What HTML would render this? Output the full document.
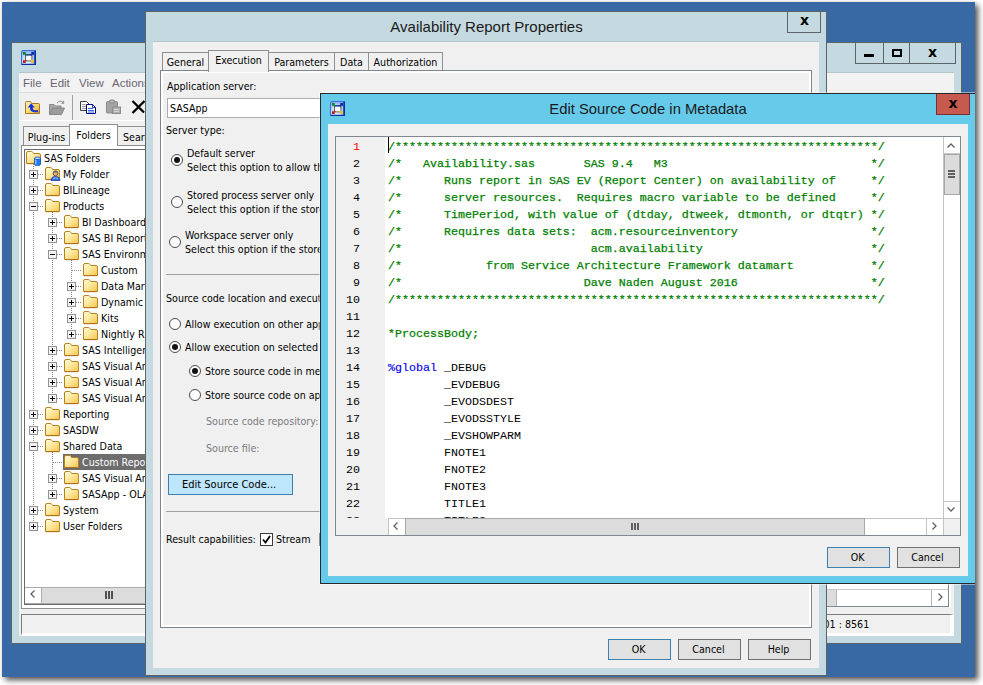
<!DOCTYPE html>
<html><head><meta charset="utf-8"><title>Edit Source Code in Metadata</title>
<style>
*{box-sizing:border-box;margin:0;padding:0}
html,body{width:983px;height:685px;overflow:hidden;background:#fff}
body{font-family:"DejaVu Sans Condensed","DejaVu Sans","Liberation Sans",sans-serif;font-stretch:condensed;font-size:10.6px;color:#000;position:relative}
.lib{font-family:"Liberation Sans",sans-serif;font-stretch:normal}
.abs{position:absolute}
#desk{position:absolute;left:2px;top:2px;width:973px;height:675px;background:#3969a5;box-shadow:3px 3px 6px rgba(0,0,0,.7);overflow:hidden}
#w{position:absolute;left:-2px;top:-2px;width:983px;height:685px}
.win{position:absolute;background:#c5d9e0;border:1px solid #5b6468}
.t{position:absolute;white-space:nowrap;line-height:14px;height:14px;font-size:10.6px}
.btn{position:absolute;background:#e1e1e1;border:1px solid #707070;text-align:center;font-size:10.6px;line-height:19px;height:21px;width:63px;padding-right:2px}
.btn.def{border-color:#3c7fb1}
.radio{position:absolute;width:12px;height:12px;border-radius:50%;background:#fff;border:1px solid #4a4a4a}
.radio.on:after{content:"";position:absolute;left:2px;top:2px;width:6px;height:6px;border-radius:50%;background:#111}
.gray{color:#7a7a80}
.tab{position:absolute;background:#f0f0f0;border:1px solid #8e8f8f;border-bottom:none;font-size:10.6px;white-space:nowrap;text-align:center}
.cap{position:absolute;border:1px solid #5b6468;text-align:center;font-weight:bold;font-size:14px;line-height:18px;color:#000;font-family:"DejaVu Sans","Liberation Sans",sans-serif;font-stretch:normal}
.code{position:absolute;left:388px;font-family:"Liberation Mono",monospace;font-size:11.67px;line-height:17px;height:17px;white-space:pre;color:#008000;-webkit-text-stroke:0.25px currentColor}
.ln{position:absolute;left:336px;width:24px;text-align:right;font-family:"Liberation Mono",monospace;font-size:11.67px;line-height:17px;height:17px;color:#000}
.tr{position:absolute;white-space:nowrap;font-size:10.6px;line-height:16px;height:16px}
.sb{position:absolute;background:#fff;border:1px solid #ababab}
.hline{position:absolute;height:1px;background:#a0a0a0}
svg{position:absolute;overflow:visible}
</style></head><body>
<div id="desk"><div id="w">
<svg width="0" height="0" style="left:0;top:0"><defs><linearGradient id="fg" x1="0" y1="0" x2="1" y2="1"><stop offset="0" stop-color="#fffce0"/><stop offset=".45" stop-color="#fde9a0"/><stop offset="1" stop-color="#f6c24a"/></linearGradient></defs></svg>

<div class="win" style="left:11px;top:42px;width:951px;height:602px"></div>
<div class="abs" style="left:19px;top:72px;width:935px;height:1px;background:#b3c4cc"></div>
<div class="abs" style="left:19px;top:73px;width:935px;height:563px;background:#f0f0f0"></div>
<svg style="left:21px;top:50px" width="16" height="16" viewBox="0 0 16 16">
<defs><radialGradient id="g21_50" cx=".45" cy=".7" r=".75"><stop offset="0" stop-color="#ffffff"/><stop offset=".5" stop-color="#c4dafa"/><stop offset="1" stop-color="#7fa8ee"/></radialGradient></defs>
<path d="M1.500 0 H15 V15 H0 V1.500 Z" fill="#3f6ddb"/>
<path d="M13.200 .8 H15 V15 H.8 V13.800 H13.200 Z" fill="#0b2fa3"/>
<path d="M1.800 1 H13.200 V13.800 H1 V1.800 Z" fill="url(#g21_50)"/>
<rect x="4.600" y="4.600" width="6.300" height="6.300" fill="#fff" stroke="#4c4c4c" stroke-width=".9"/>
<rect x="4.600" y="4.300" width="6.300" height="1.300" fill="#1b3ba3"/>
<path d="M0 0 H3.200 L2.200 1 L3.700 2.500 L2.500 3.700 L1 2.200 L0 3.200 Z" transform="translate(2,2)" fill="#0b8a1b"/>
<path d="M0 0 H3.200 L2.200 1 L3.700 2.500 L2.500 3.700 L1 2.200 L0 3.200 Z" transform="translate(13,2) scale(-1,1)" fill="#0c2a9a"/>
<path d="M0 0 H3.200 L2.200 1 L3.700 2.500 L2.500 3.700 L1 2.200 L0 3.200 Z" transform="translate(2,12.900) scale(1,-1)" fill="#b41c1c"/>
<path d="M0 0 H3.200 L2.200 1 L3.700 2.500 L2.500 3.700 L1 2.200 L0 3.200 Z" transform="translate(13,12.900) scale(-1,-1)" fill="#f4c424"/>
</svg>
<div class="cap" style="left:855px;top:42px;width:29px;height:22px"><div class="abs" style="left:8px;top:11px;width:10px;height:3px;background:#000"></div></div>
<div class="cap" style="left:883px;top:42px;width:27px;height:22px"><div class="abs" style="left:8px;top:6px;width:10px;height:8px;border:2px solid #000"></div></div>
<div class="cap" style="left:909px;top:42px;width:47px;height:22px">x</div>
<div class="abs" style="left:19px;top:73px;width:935px;height:19px;background:#f2f2f2"></div>
<div class="abs" style="left:19px;top:92px;width:935px;height:1px;background:#dcdcdc"></div>
<div class="t gray lib" style="left:23px;top:76px;font-size:11.500px;color:#6b6572">File</div>
<div class="t gray lib" style="left:50px;top:76px;font-size:11.500px;color:#6b6572">Edit</div>
<div class="t gray lib" style="left:79px;top:76px;font-size:11.500px;color:#6b6572">View</div>
<div class="t gray lib" style="left:112px;top:76px;font-size:11.500px;color:#6b6572">Actions</div>
<div class="abs" style="left:72px;top:95px;width:1px;height:25px;background:#a0a0a0"></div>
<div class="abs" style="left:19px;top:120px;width:935px;height:1px;background:#fff"></div>
<svg style="left:25px;top:100px" width="16" height="15" viewBox="0 0 16 15">
<defs><linearGradient id="upf" x1="0" y1="0" x2="1" y2="1"><stop offset="0" stop-color="#fff6cc"/><stop offset=".5" stop-color="#fbd976"/><stop offset="1" stop-color="#f0a92c"/></linearGradient></defs>
<path d="M.5 13.500 V2.500 Q.5 1.500 1.500 1.500 H5.500 L7 3.500 H13.500 Q14.500 3.500 14.500 4.500 V13.500 Z" fill="url(#upf)" stroke="#a87a1c"/>
<path d="M6.200 3.200 L9.900 7.600 H7.700 Q7.700 10.200 10 10.200 H13.200 V12.200 H9.500 Q5 12.200 4.900 7.600 H2.600 Z" fill="#1434dc"/>
</svg>
<svg style="left:48px;top:99px" width="18" height="17" viewBox="0 0 18 17">
<path d="M1.500 15.500 L1.500 5.500 L6 5.500 L7.500 7 L13 7 L13 9" fill="#a8a8a8" stroke="#8a8a8a"/>
<path d="M1.500 15.500 L4.500 9 L16.500 9 L13.500 15.500 Z" fill="#9c9c9c" stroke="#888"/>
<path d="M9 4 Q12 .5 15 3.500" fill="none" stroke="#8a8a8a" stroke-width="1"/><path d="M13.500 4.500 L15.800 4.200 L15.500 1.800" fill="none" stroke="#8a8a8a" stroke-width="1"/>
</svg>
<svg style="left:80px;top:100px" width="17" height="15" viewBox="0 0 17 15">
<path d="M.5 1.500 H6.500 L9.500 4.500 V10.500 H.5 Z" fill="#fff" stroke="#3c3c3c"/>
<path d="M2 4.500H5.500M2 6.500H7.500M2 8.500H7.500" stroke="#a0a0a0" stroke-width="1"/>
<path d="M6.500 4.500 H12.500 L15.500 7.500 V13.500 H6.500 Z" fill="#fff" stroke="#00008c"/>
<path d="M12.500 4.500 V7.500 H15.500" fill="none" stroke="#00008c" stroke-width=".8"/>
<path d="M8 8.500H13M8 10.500H14M8 12H14" stroke="#3a6ae0" stroke-width="1"/>
</svg>
<svg style="left:105px;top:99px" width="17" height="16" viewBox="0 0 17 16">
<rect x="1.500" y="2.500" width="11" height="11.500" rx="1" fill="#a4a4a4" stroke="#8c8c8c"/>
<rect x="4.500" y="1" width="5" height="3" rx="1" fill="#b4b4b4" stroke="#8c8c8c"/>
<rect x="7.500" y="8" width="8" height="6.500" fill="#b0b0b0" stroke="#8c8c8c"/>
<path d="M9 10.500h5M9 12.500h5" stroke="#d4d4d4" stroke-width="1"/>
</svg>
<svg style="left:131px;top:100px" width="16" height="14" viewBox="0 0 16 14"><path d="M1.500 1 L13 12.500 M13.500 1 L1.500 13" stroke="#000" stroke-width="2.300" fill="none"/></svg>
<div class="abs" style="left:21px;top:145px;width:400px;height:464px;border:1px solid #8e8f8f;background:#fff"></div>
<div class="tab" style="left:23px;top:126px;width:47px;height:19px;line-height:20px">Plug-ins</div>
<div class="tab" style="left:117px;top:126px;width:60px;height:19px;line-height:20px;text-align:left;padding-left:5px">Search</div>
<div class="tab" style="left:69px;top:124px;width:49px;height:22px;line-height:20px;background:#fff">Folders</div>
<div class="abs" style="left:24px;top:149px;width:300px;height:456px;border:1px solid #6a6a6a;border-right:none;background:#fff"></div>
<div class="abs" style="left:33px;top:164px;width:1px;height:362px;background:repeating-linear-gradient(180deg,#8a8a8a 0 1px,transparent 1px 2px)"></div>
<div class="abs" style="left:52px;top:212px;width:1px;height:186px;background:repeating-linear-gradient(180deg,#8a8a8a 0 1px,transparent 1px 2px)"></div>
<div class="abs" style="left:71px;top:260px;width:1px;height:74px;background:repeating-linear-gradient(180deg,#8a8a8a 0 1px,transparent 1px 2px)"></div>
<div class="abs" style="left:52px;top:452px;width:1px;height:42px;background:repeating-linear-gradient(180deg,#8a8a8a 0 1px,transparent 1px 2px)"></div>
<svg style="left:26px;top:151px" width="17" height="15" viewBox="0 0 17 15"><path d="M0.500 12.500 V2 Q0.500 .5 2 .5 H5.500 Q6.500 .5 7 1.500 L7.500 2.500 H13 Q14.500 2.500 14.500 4 V12.500 Z" fill="url(#fg)" stroke="#b9801f" stroke-width="1"/><path d="M1 12.700 H14" stroke="#a86c12" stroke-width=".8"/><path d="M8.500 7.300 v6 a3 1.300 0 0 0 6 0 v-6z" fill="#1c7cf4" stroke="#0b48b0" stroke-width=".7"/><path d="M9.800 8.300 v5" stroke="#9fd0ff" stroke-width="1.200"/><ellipse cx="11.500" cy="7.300" rx="3" ry="1.300" fill="#a8d4ff" stroke="#0b48b0" stroke-width=".7"/></svg>
<div class="tr" style="left:44px;top:150.4px">SAS Folders</div>
<div class="abs" style="left:34px;top:174px;width:10px;height:1px;background:repeating-linear-gradient(90deg,#8a8a8a 0 1px,transparent 1px 2px)"></div>
<svg style="left:29px;top:170px" width="9" height="9" viewBox="0 0 9 9"><rect x=".5" y=".5" width="8" height="8" fill="#f4f4f4" stroke="#919191"/><path d="M2 4.5h5" stroke="#000" stroke-width="1"/><path d="M4.5 2v5" stroke="#000" stroke-width="1"/></svg>
<svg style="left:45px;top:167px" width="17" height="15" viewBox="0 0 17 15"><path d="M0.500 12.500 V2 Q0.500 .5 2 .5 H5.500 Q6.500 .5 7 1.500 L7.500 2.500 H13 Q14.500 2.500 14.500 4 V12.500 Z" fill="url(#fg)" stroke="#b9801f" stroke-width="1"/><path d="M1 12.700 H14" stroke="#a86c12" stroke-width=".8"/><circle cx="10.500" cy="6.300" r="2.400" fill="#dcb491" stroke="#4a4038" stroke-width=".8"/><path d="M8.200 5.500 Q10.500 2.500 12.800 5.500" fill="#5a5a5a"/><path d="M6 13.500 q0-4 4.500-4 q4.500 0 4.500 4z" fill="#2f6be0" stroke="#173a9c" stroke-width=".7"/><path d="M8 11.500 q2.500-1.200 5 0" stroke="#9cc4ff" stroke-width="1" fill="none"/></svg>
<div class="tr" style="left:63px;top:166.4px">My Folder</div>
<div class="abs" style="left:34px;top:190px;width:10px;height:1px;background:repeating-linear-gradient(90deg,#8a8a8a 0 1px,transparent 1px 2px)"></div>
<svg style="left:29px;top:186px" width="9" height="9" viewBox="0 0 9 9"><rect x=".5" y=".5" width="8" height="8" fill="#f4f4f4" stroke="#919191"/><path d="M2 4.5h5" stroke="#000" stroke-width="1"/><path d="M4.5 2v5" stroke="#000" stroke-width="1"/></svg>
<svg style="left:45px;top:183px" width="17" height="15" viewBox="0 0 17 15"><path d="M0.500 12.500 V2 Q0.500 .5 2 .5 H5.500 Q6.500 .5 7 1.500 L7.500 2.500 H13 Q14.500 2.500 14.500 4 V12.500 Z" fill="url(#fg)" stroke="#b9801f" stroke-width="1"/><path d="M1 12.700 H14" stroke="#a86c12" stroke-width=".8"/></svg>
<div class="tr" style="left:63px;top:182.4px">BILineage</div>
<div class="abs" style="left:34px;top:206px;width:10px;height:1px;background:repeating-linear-gradient(90deg,#8a8a8a 0 1px,transparent 1px 2px)"></div>
<svg style="left:29px;top:202px" width="9" height="9" viewBox="0 0 9 9"><rect x=".5" y=".5" width="8" height="8" fill="#f4f4f4" stroke="#919191"/><path d="M2 4.5h5" stroke="#000" stroke-width="1"/></svg>
<svg style="left:45px;top:199px" width="17" height="15" viewBox="0 0 17 15"><path d="M0.500 12.500 V2 Q0.500 .5 2 .5 H5.500 Q6.500 .5 7 1.500 L7.500 2.500 H13 Q14.500 2.500 14.500 4 V12.500 Z" fill="url(#fg)" stroke="#b9801f" stroke-width="1"/><path d="M1 12.700 H14" stroke="#a86c12" stroke-width=".8"/></svg>
<div class="tr" style="left:63px;top:198.4px">Products</div>
<div class="abs" style="left:53px;top:222px;width:10px;height:1px;background:repeating-linear-gradient(90deg,#8a8a8a 0 1px,transparent 1px 2px)"></div>
<svg style="left:48px;top:218px" width="9" height="9" viewBox="0 0 9 9"><rect x=".5" y=".5" width="8" height="8" fill="#f4f4f4" stroke="#919191"/><path d="M2 4.5h5" stroke="#000" stroke-width="1"/><path d="M4.5 2v5" stroke="#000" stroke-width="1"/></svg>
<svg style="left:64px;top:215px" width="17" height="15" viewBox="0 0 17 15"><path d="M0.500 12.500 V2 Q0.500 .5 2 .5 H5.500 Q6.500 .5 7 1.500 L7.500 2.500 H13 Q14.500 2.500 14.500 4 V12.500 Z" fill="url(#fg)" stroke="#b9801f" stroke-width="1"/><path d="M1 12.700 H14" stroke="#a86c12" stroke-width=".8"/></svg>
<div class="tr" style="left:82px;top:214.4px">BI Dashboard</div>
<div class="abs" style="left:53px;top:238px;width:10px;height:1px;background:repeating-linear-gradient(90deg,#8a8a8a 0 1px,transparent 1px 2px)"></div>
<svg style="left:48px;top:234px" width="9" height="9" viewBox="0 0 9 9"><rect x=".5" y=".5" width="8" height="8" fill="#f4f4f4" stroke="#919191"/><path d="M2 4.5h5" stroke="#000" stroke-width="1"/><path d="M4.5 2v5" stroke="#000" stroke-width="1"/></svg>
<svg style="left:64px;top:231px" width="17" height="15" viewBox="0 0 17 15"><path d="M0.500 12.500 V2 Q0.500 .5 2 .5 H5.500 Q6.500 .5 7 1.500 L7.500 2.500 H13 Q14.500 2.500 14.500 4 V12.500 Z" fill="url(#fg)" stroke="#b9801f" stroke-width="1"/><path d="M1 12.700 H14" stroke="#a86c12" stroke-width=".8"/></svg>
<div class="tr" style="left:82px;top:230.4px">SAS BI Report</div>
<div class="abs" style="left:53px;top:254px;width:10px;height:1px;background:repeating-linear-gradient(90deg,#8a8a8a 0 1px,transparent 1px 2px)"></div>
<svg style="left:48px;top:250px" width="9" height="9" viewBox="0 0 9 9"><rect x=".5" y=".5" width="8" height="8" fill="#f4f4f4" stroke="#919191"/><path d="M2 4.5h5" stroke="#000" stroke-width="1"/></svg>
<svg style="left:64px;top:247px" width="17" height="15" viewBox="0 0 17 15"><path d="M0.500 12.500 V2 Q0.500 .5 2 .5 H5.500 Q6.500 .5 7 1.500 L7.500 2.500 H13 Q14.500 2.500 14.500 4 V12.500 Z" fill="url(#fg)" stroke="#b9801f" stroke-width="1"/><path d="M1 12.700 H14" stroke="#a86c12" stroke-width=".8"/></svg>
<div class="tr" style="left:82px;top:246.4px">SAS Environme</div>
<div class="abs" style="left:72px;top:270px;width:10px;height:1px;background:repeating-linear-gradient(90deg,#8a8a8a 0 1px,transparent 1px 2px)"></div>
<svg style="left:83px;top:263px" width="17" height="15" viewBox="0 0 17 15"><path d="M0.500 12.500 V2 Q0.500 .5 2 .5 H5.500 Q6.500 .5 7 1.500 L7.500 2.500 H13 Q14.500 2.500 14.500 4 V12.500 Z" fill="url(#fg)" stroke="#b9801f" stroke-width="1"/><path d="M1 12.700 H14" stroke="#a86c12" stroke-width=".8"/></svg>
<div class="tr" style="left:101px;top:262.4px">Custom</div>
<div class="abs" style="left:72px;top:286px;width:10px;height:1px;background:repeating-linear-gradient(90deg,#8a8a8a 0 1px,transparent 1px 2px)"></div>
<svg style="left:67px;top:282px" width="9" height="9" viewBox="0 0 9 9"><rect x=".5" y=".5" width="8" height="8" fill="#f4f4f4" stroke="#919191"/><path d="M2 4.5h5" stroke="#000" stroke-width="1"/><path d="M4.5 2v5" stroke="#000" stroke-width="1"/></svg>
<svg style="left:83px;top:279px" width="17" height="15" viewBox="0 0 17 15"><path d="M0.500 12.500 V2 Q0.500 .5 2 .5 H5.500 Q6.500 .5 7 1.500 L7.500 2.500 H13 Q14.500 2.500 14.500 4 V12.500 Z" fill="url(#fg)" stroke="#b9801f" stroke-width="1"/><path d="M1 12.700 H14" stroke="#a86c12" stroke-width=".8"/></svg>
<div class="tr" style="left:101px;top:278.4px">Data Mar</div>
<div class="abs" style="left:72px;top:302px;width:10px;height:1px;background:repeating-linear-gradient(90deg,#8a8a8a 0 1px,transparent 1px 2px)"></div>
<svg style="left:67px;top:298px" width="9" height="9" viewBox="0 0 9 9"><rect x=".5" y=".5" width="8" height="8" fill="#f4f4f4" stroke="#919191"/><path d="M2 4.5h5" stroke="#000" stroke-width="1"/><path d="M4.5 2v5" stroke="#000" stroke-width="1"/></svg>
<svg style="left:83px;top:295px" width="17" height="15" viewBox="0 0 17 15"><path d="M0.500 12.500 V2 Q0.500 .5 2 .5 H5.500 Q6.500 .5 7 1.500 L7.500 2.500 H13 Q14.500 2.500 14.500 4 V12.500 Z" fill="url(#fg)" stroke="#b9801f" stroke-width="1"/><path d="M1 12.700 H14" stroke="#a86c12" stroke-width=".8"/></svg>
<div class="tr" style="left:101px;top:294.4px">Dynamic</div>
<div class="abs" style="left:72px;top:318px;width:10px;height:1px;background:repeating-linear-gradient(90deg,#8a8a8a 0 1px,transparent 1px 2px)"></div>
<svg style="left:67px;top:314px" width="9" height="9" viewBox="0 0 9 9"><rect x=".5" y=".5" width="8" height="8" fill="#f4f4f4" stroke="#919191"/><path d="M2 4.5h5" stroke="#000" stroke-width="1"/><path d="M4.5 2v5" stroke="#000" stroke-width="1"/></svg>
<svg style="left:83px;top:311px" width="17" height="15" viewBox="0 0 17 15"><path d="M0.500 12.500 V2 Q0.500 .5 2 .5 H5.500 Q6.500 .5 7 1.500 L7.500 2.500 H13 Q14.500 2.500 14.500 4 V12.500 Z" fill="url(#fg)" stroke="#b9801f" stroke-width="1"/><path d="M1 12.700 H14" stroke="#a86c12" stroke-width=".8"/></svg>
<div class="tr" style="left:101px;top:310.4px">Kits</div>
<div class="abs" style="left:72px;top:334px;width:10px;height:1px;background:repeating-linear-gradient(90deg,#8a8a8a 0 1px,transparent 1px 2px)"></div>
<svg style="left:67px;top:330px" width="9" height="9" viewBox="0 0 9 9"><rect x=".5" y=".5" width="8" height="8" fill="#f4f4f4" stroke="#919191"/><path d="M2 4.5h5" stroke="#000" stroke-width="1"/><path d="M4.5 2v5" stroke="#000" stroke-width="1"/></svg>
<svg style="left:83px;top:327px" width="17" height="15" viewBox="0 0 17 15"><path d="M0.500 12.500 V2 Q0.500 .5 2 .5 H5.500 Q6.500 .5 7 1.500 L7.500 2.500 H13 Q14.500 2.500 14.500 4 V12.500 Z" fill="url(#fg)" stroke="#b9801f" stroke-width="1"/><path d="M1 12.700 H14" stroke="#a86c12" stroke-width=".8"/></svg>
<div class="tr" style="left:101px;top:326.4px">Nightly R</div>
<div class="abs" style="left:53px;top:350px;width:10px;height:1px;background:repeating-linear-gradient(90deg,#8a8a8a 0 1px,transparent 1px 2px)"></div>
<svg style="left:48px;top:346px" width="9" height="9" viewBox="0 0 9 9"><rect x=".5" y=".5" width="8" height="8" fill="#f4f4f4" stroke="#919191"/><path d="M2 4.5h5" stroke="#000" stroke-width="1"/><path d="M4.5 2v5" stroke="#000" stroke-width="1"/></svg>
<svg style="left:64px;top:343px" width="17" height="15" viewBox="0 0 17 15"><path d="M0.500 12.500 V2 Q0.500 .5 2 .5 H5.500 Q6.500 .5 7 1.500 L7.500 2.500 H13 Q14.500 2.500 14.500 4 V12.500 Z" fill="url(#fg)" stroke="#b9801f" stroke-width="1"/><path d="M1 12.700 H14" stroke="#a86c12" stroke-width=".8"/></svg>
<div class="tr" style="left:82px;top:342.4px">SAS Intelligen</div>
<div class="abs" style="left:53px;top:366px;width:10px;height:1px;background:repeating-linear-gradient(90deg,#8a8a8a 0 1px,transparent 1px 2px)"></div>
<svg style="left:48px;top:362px" width="9" height="9" viewBox="0 0 9 9"><rect x=".5" y=".5" width="8" height="8" fill="#f4f4f4" stroke="#919191"/><path d="M2 4.5h5" stroke="#000" stroke-width="1"/><path d="M4.5 2v5" stroke="#000" stroke-width="1"/></svg>
<svg style="left:64px;top:359px" width="17" height="15" viewBox="0 0 17 15"><path d="M0.500 12.500 V2 Q0.500 .5 2 .5 H5.500 Q6.500 .5 7 1.500 L7.500 2.500 H13 Q14.500 2.500 14.500 4 V12.500 Z" fill="url(#fg)" stroke="#b9801f" stroke-width="1"/><path d="M1 12.700 H14" stroke="#a86c12" stroke-width=".8"/></svg>
<div class="tr" style="left:82px;top:358.4px">SAS Visual An</div>
<div class="abs" style="left:53px;top:382px;width:10px;height:1px;background:repeating-linear-gradient(90deg,#8a8a8a 0 1px,transparent 1px 2px)"></div>
<svg style="left:48px;top:378px" width="9" height="9" viewBox="0 0 9 9"><rect x=".5" y=".5" width="8" height="8" fill="#f4f4f4" stroke="#919191"/><path d="M2 4.5h5" stroke="#000" stroke-width="1"/><path d="M4.5 2v5" stroke="#000" stroke-width="1"/></svg>
<svg style="left:64px;top:375px" width="17" height="15" viewBox="0 0 17 15"><path d="M0.500 12.500 V2 Q0.500 .5 2 .5 H5.500 Q6.500 .5 7 1.500 L7.500 2.500 H13 Q14.500 2.500 14.500 4 V12.500 Z" fill="url(#fg)" stroke="#b9801f" stroke-width="1"/><path d="M1 12.700 H14" stroke="#a86c12" stroke-width=".8"/></svg>
<div class="tr" style="left:82px;top:374.4px">SAS Visual An</div>
<div class="abs" style="left:53px;top:398px;width:10px;height:1px;background:repeating-linear-gradient(90deg,#8a8a8a 0 1px,transparent 1px 2px)"></div>
<svg style="left:48px;top:394px" width="9" height="9" viewBox="0 0 9 9"><rect x=".5" y=".5" width="8" height="8" fill="#f4f4f4" stroke="#919191"/><path d="M2 4.5h5" stroke="#000" stroke-width="1"/><path d="M4.5 2v5" stroke="#000" stroke-width="1"/></svg>
<svg style="left:64px;top:391px" width="17" height="15" viewBox="0 0 17 15"><path d="M0.500 12.500 V2 Q0.500 .5 2 .5 H5.500 Q6.500 .5 7 1.500 L7.500 2.500 H13 Q14.500 2.500 14.500 4 V12.500 Z" fill="url(#fg)" stroke="#b9801f" stroke-width="1"/><path d="M1 12.700 H14" stroke="#a86c12" stroke-width=".8"/></svg>
<div class="tr" style="left:82px;top:390.4px">SAS Visual An</div>
<div class="abs" style="left:34px;top:414px;width:10px;height:1px;background:repeating-linear-gradient(90deg,#8a8a8a 0 1px,transparent 1px 2px)"></div>
<svg style="left:29px;top:410px" width="9" height="9" viewBox="0 0 9 9"><rect x=".5" y=".5" width="8" height="8" fill="#f4f4f4" stroke="#919191"/><path d="M2 4.5h5" stroke="#000" stroke-width="1"/><path d="M4.5 2v5" stroke="#000" stroke-width="1"/></svg>
<svg style="left:45px;top:407px" width="17" height="15" viewBox="0 0 17 15"><path d="M0.500 12.500 V2 Q0.500 .5 2 .5 H5.500 Q6.500 .5 7 1.500 L7.500 2.500 H13 Q14.500 2.500 14.500 4 V12.500 Z" fill="url(#fg)" stroke="#b9801f" stroke-width="1"/><path d="M1 12.700 H14" stroke="#a86c12" stroke-width=".8"/></svg>
<div class="tr" style="left:63px;top:406.4px">Reporting</div>
<div class="abs" style="left:34px;top:430px;width:10px;height:1px;background:repeating-linear-gradient(90deg,#8a8a8a 0 1px,transparent 1px 2px)"></div>
<svg style="left:29px;top:426px" width="9" height="9" viewBox="0 0 9 9"><rect x=".5" y=".5" width="8" height="8" fill="#f4f4f4" stroke="#919191"/><path d="M2 4.5h5" stroke="#000" stroke-width="1"/><path d="M4.5 2v5" stroke="#000" stroke-width="1"/></svg>
<svg style="left:45px;top:423px" width="17" height="15" viewBox="0 0 17 15"><path d="M0.500 12.500 V2 Q0.500 .5 2 .5 H5.500 Q6.500 .5 7 1.500 L7.500 2.500 H13 Q14.500 2.500 14.500 4 V12.500 Z" fill="url(#fg)" stroke="#b9801f" stroke-width="1"/><path d="M1 12.700 H14" stroke="#a86c12" stroke-width=".8"/></svg>
<div class="tr" style="left:63px;top:422.4px">SASDW</div>
<div class="abs" style="left:34px;top:446px;width:10px;height:1px;background:repeating-linear-gradient(90deg,#8a8a8a 0 1px,transparent 1px 2px)"></div>
<svg style="left:29px;top:442px" width="9" height="9" viewBox="0 0 9 9"><rect x=".5" y=".5" width="8" height="8" fill="#f4f4f4" stroke="#919191"/><path d="M2 4.5h5" stroke="#000" stroke-width="1"/></svg>
<svg style="left:45px;top:439px" width="17" height="15" viewBox="0 0 17 15"><path d="M0.500 12.500 V2 Q0.500 .5 2 .5 H5.500 Q6.500 .5 7 1.500 L7.500 2.500 H13 Q14.500 2.500 14.500 4 V12.500 Z" fill="url(#fg)" stroke="#b9801f" stroke-width="1"/><path d="M1 12.700 H14" stroke="#a86c12" stroke-width=".8"/></svg>
<div class="tr" style="left:63px;top:438.4px">Shared Data</div>
<div class="abs" style="left:53px;top:462px;width:10px;height:1px;background:repeating-linear-gradient(90deg,#8a8a8a 0 1px,transparent 1px 2px)"></div>
<div class="abs" style="left:63px;top:454px;width:100px;height:16px;background:#6d6d6d"></div>
<svg style="left:64px;top:455px" width="17" height="15" viewBox="0 0 17 15"><path d="M0.500 12.500 V2 Q0.500 .5 2 .5 H5.500 Q6.500 .5 7 1.500 L7.500 2.500 H13 Q14.500 2.500 14.500 4 V12.500 Z" fill="url(#fg)" stroke="#b9801f" stroke-width="1"/><path d="M1 12.700 H14" stroke="#a86c12" stroke-width=".8"/></svg>
<div class="tr" style="left:82px;top:454.4px;color:#fff">Custom Repo</div>
<div class="abs" style="left:53px;top:478px;width:10px;height:1px;background:repeating-linear-gradient(90deg,#8a8a8a 0 1px,transparent 1px 2px)"></div>
<svg style="left:48px;top:474px" width="9" height="9" viewBox="0 0 9 9"><rect x=".5" y=".5" width="8" height="8" fill="#f4f4f4" stroke="#919191"/><path d="M2 4.5h5" stroke="#000" stroke-width="1"/><path d="M4.5 2v5" stroke="#000" stroke-width="1"/></svg>
<svg style="left:64px;top:471px" width="17" height="15" viewBox="0 0 17 15"><path d="M0.500 12.500 V2 Q0.500 .5 2 .5 H5.500 Q6.500 .5 7 1.500 L7.500 2.500 H13 Q14.500 2.500 14.500 4 V12.500 Z" fill="url(#fg)" stroke="#b9801f" stroke-width="1"/><path d="M1 12.700 H14" stroke="#a86c12" stroke-width=".8"/></svg>
<div class="tr" style="left:82px;top:470.4px">SAS Visual An</div>
<div class="abs" style="left:53px;top:494px;width:10px;height:1px;background:repeating-linear-gradient(90deg,#8a8a8a 0 1px,transparent 1px 2px)"></div>
<svg style="left:48px;top:490px" width="9" height="9" viewBox="0 0 9 9"><rect x=".5" y=".5" width="8" height="8" fill="#f4f4f4" stroke="#919191"/><path d="M2 4.5h5" stroke="#000" stroke-width="1"/><path d="M4.5 2v5" stroke="#000" stroke-width="1"/></svg>
<svg style="left:64px;top:487px" width="17" height="15" viewBox="0 0 17 15"><path d="M0.500 12.500 V2 Q0.500 .5 2 .5 H5.500 Q6.500 .5 7 1.500 L7.500 2.500 H13 Q14.500 2.500 14.500 4 V12.500 Z" fill="url(#fg)" stroke="#b9801f" stroke-width="1"/><path d="M1 12.700 H14" stroke="#a86c12" stroke-width=".8"/></svg>
<div class="tr" style="left:82px;top:486.4px">SASApp - OLA</div>
<div class="abs" style="left:34px;top:510px;width:10px;height:1px;background:repeating-linear-gradient(90deg,#8a8a8a 0 1px,transparent 1px 2px)"></div>
<svg style="left:29px;top:506px" width="9" height="9" viewBox="0 0 9 9"><rect x=".5" y=".5" width="8" height="8" fill="#f4f4f4" stroke="#919191"/><path d="M2 4.5h5" stroke="#000" stroke-width="1"/><path d="M4.5 2v5" stroke="#000" stroke-width="1"/></svg>
<svg style="left:45px;top:503px" width="17" height="15" viewBox="0 0 17 15"><path d="M0.500 12.500 V2 Q0.500 .5 2 .5 H5.500 Q6.500 .5 7 1.500 L7.500 2.500 H13 Q14.500 2.500 14.500 4 V12.500 Z" fill="url(#fg)" stroke="#b9801f" stroke-width="1"/><path d="M1 12.700 H14" stroke="#a86c12" stroke-width=".8"/></svg>
<div class="tr" style="left:63px;top:502.4px">System</div>
<div class="abs" style="left:34px;top:526px;width:10px;height:1px;background:repeating-linear-gradient(90deg,#8a8a8a 0 1px,transparent 1px 2px)"></div>
<svg style="left:29px;top:522px" width="9" height="9" viewBox="0 0 9 9"><rect x=".5" y=".5" width="8" height="8" fill="#f4f4f4" stroke="#919191"/><path d="M2 4.5h5" stroke="#000" stroke-width="1"/><path d="M4.5 2v5" stroke="#000" stroke-width="1"/></svg>
<svg style="left:45px;top:519px" width="17" height="15" viewBox="0 0 17 15"><path d="M0.500 12.500 V2 Q0.500 .5 2 .5 H5.500 Q6.500 .5 7 1.500 L7.500 2.500 H13 Q14.500 2.500 14.500 4 V12.500 Z" fill="url(#fg)" stroke="#b9801f" stroke-width="1"/><path d="M1 12.700 H14" stroke="#a86c12" stroke-width=".8"/></svg>
<div class="tr" style="left:63px;top:518.4px">User Folders</div>
<div class="abs" style="left:25px;top:587px;width:300px;height:17px;background:#dcdcdc;border-top:1px solid #ababab;border-bottom:1px solid #ababab"></div>
<div class="abs" style="left:25px;top:588px;width:17px;height:15px;background:#fff;border-right:1px solid #ababab"></div>
<svg style="left:32.5px;top:594.2px" width="1" height="1"><path d="M1.500 -3.500 L-2 0 L1.500 3.500" fill="none" stroke="#606060" stroke-width="1.300"/></svg>
<div class="abs" style="left:105px;top:591px;width:8px;height:8px;background:repeating-linear-gradient(90deg,#505050 0 2px,transparent 2px 3px)"></div>
<div class="abs" style="left:21px;top:614px;width:933px;height:22px;border:1px solid #7c7c7c;border-right:4px solid #fff;border-bottom:3px solid #fff;background:#f0f0f0"></div>
<div class="t " style="left:817.5px;top:617px;">001 : 8561</div>
<div class="abs" style="left:500px;top:584px;width:449px;height:23px;background:#fff;border-right:1px solid #828790;border-bottom:1px solid #828790"></div>
<div class="abs" style="left:949px;top:584px;width:2px;height:24px;background:#fff"></div>
<div class="abs" style="left:500px;top:589px;width:448px;height:1px;background:#c8c8c8"></div>
<div class="abs" style="left:500px;top:590px;width:337px;height:16px;background:#dcdcdc;border-right:1px solid #b4b4b4"></div>
<div class="abs" style="left:931px;top:590px;width:1px;height:16px;background:#b4b4b4"></div>
<svg style="left:939.5px;top:597.2px" width="1" height="1"><path d="M-1.500 -3.500 L2 0 L-1.500 3.500" fill="none" stroke="#606060" stroke-width="1.300"/></svg>
<div class="win" style="left:145px;top:11px;width:682px;height:665px"></div>
<div class="abs" style="left:153px;top:41px;width:666px;height:1px;background:#b3c4cc"></div>
<div class="abs" style="left:153px;top:42px;width:666px;height:626px;background:#f0f0f0"></div>
<div class="t" style="left:146px;top:17px;width:681px;text-align:center;font-size:15px;line-height:20px;height:20px;color:#1a1a1a;font-family:'Liberation Sans',sans-serif">Availability Report Properties</div>
<div class="cap" style="left:787px;top:11px;width:34px;height:22px;line-height:17px;padding-left:1px">x</div>
<div class="abs" style="left:160px;top:70px;width:652px;height:558px;border:1px solid #7f858e;background:#f0f0f0;box-shadow:inset 0 0 0 2px #fff"></div>
<div class="tab" style="left:162px;top:52px;width:47px;height:18px;line-height:18px">General</div>
<div class="tab" style="left:268px;top:52px;width:67px;height:18px;line-height:18px">Parameters</div>
<div class="tab" style="left:334px;top:52px;width:35px;height:18px;line-height:18px">Data</div>
<div class="tab" style="left:368px;top:52px;width:75px;height:18px;line-height:18px">Authorization</div>
<div class="tab" style="left:208px;top:50px;width:61px;height:22px;line-height:19px">Execution</div>
<div class="t " style="left:167px;top:79px;">Application server:</div>
<div class="abs" style="left:167px;top:98px;width:644px;height:20px;background:#fff;border:1px solid #abadb3"></div>
<div class="t " style="left:170px;top:101px;">SASApp</div>
<div class="t " style="left:166px;top:123px;">Server type:</div>
<div class="radio on" style="left:171px;top:154px"></div>
<div class="t " style="left:187px;top:146px;">Default server</div>
<div class="t " style="left:187px;top:160px;">Select this option to allow the</div>
<div class="radio" style="left:171px;top:196px"></div>
<div class="t " style="left:187px;top:188px;">Stored process server only</div>
<div class="t " style="left:187px;top:202px;">Select this option if the stored</div>
<div class="radio" style="left:169px;top:236px"></div>
<div class="t " style="left:185px;top:228px;">Workspace server only</div>
<div class="t " style="left:185px;top:242px;">Select this option if the stored</div>
<div class="hline" style="left:166px;top:274px;width:640px"></div>
<div class="t " style="left:166px;top:291px;">Source code location and execution</div>
<div class="radio" style="left:169px;top:318px"></div>
<div class="t " style="left:185px;top:317px;">Allow execution on other app</div>
<div class="radio on" style="left:169px;top:341px"></div>
<div class="t " style="left:185px;top:340px;">Allow execution on selected a</div>
<div class="radio on" style="left:189px;top:365px"></div>
<div class="t " style="left:205px;top:364px;">Store source code in metadata</div>
<div class="radio" style="left:189px;top:389px"></div>
<div class="t " style="left:205px;top:388px;">Store source code on app</div>
<div class="t gray" style="left:206px;top:414px;">Source code repository:</div>
<div class="t gray" style="left:206px;top:441px;">Source file:</div>
<div class="btn" style="left:168px;top:474px;width:125px;height:21px;background:#bee6fd;border-color:#3c7fb1;text-align:left;padding-left:13px;font-size:11px">Edit Source Code...</div>
<div class="hline" style="left:166px;top:511px;width:640px"></div>
<div class="t " style="left:166px;top:532px;">Result capabilities:</div>
<div class="abs" style="left:260px;top:533px;width:13px;height:13px;background:#fff;border:1px solid #3a3a3a"></div>
<svg style="left:262px;top:535px" width="9" height="9" viewBox="0 0 9 9"><path d="M1 4.500 L3.500 7.500 L8 1" fill="none" stroke="#000" stroke-width="1.800"/></svg>
<div class="t " style="left:276px;top:532px;">Stream</div>
<div class="abs" style="left:319px;top:533px;width:13px;height:13px;background:#fff;border:1px solid #3a3a3a"></div>
<div class="btn def" style="left:608px;top:639px">OK</div>
<div class="btn" style="left:678px;top:639px">Cancel</div>
<div class="btn" style="left:748px;top:639px">Help</div>
<div class="win" style="left:320px;top:93px;width:656px;height:491px;background:#66cbea;border-color:#26282c;box-shadow:0 0 0 1px rgba(255,255,255,.45)"></div>
<div class="abs" style="left:328px;top:124px;width:640px;height:452px;background:#f0f0f0"></div>
<svg style="left:330px;top:101px" width="16" height="16" viewBox="0 0 16 16">
<defs><radialGradient id="g330_101" cx=".45" cy=".7" r=".75"><stop offset="0" stop-color="#ffffff"/><stop offset=".5" stop-color="#c4dafa"/><stop offset="1" stop-color="#7fa8ee"/></radialGradient></defs>
<path d="M1.500 0 H15 V15 H0 V1.500 Z" fill="#3f6ddb"/>
<path d="M13.200 .8 H15 V15 H.8 V13.800 H13.200 Z" fill="#0b2fa3"/>
<path d="M1.800 1 H13.200 V13.800 H1 V1.800 Z" fill="url(#g330_101)"/>
<rect x="4.600" y="4.600" width="6.300" height="6.300" fill="#fff" stroke="#4c4c4c" stroke-width=".9"/>
<rect x="4.600" y="4.300" width="6.300" height="1.300" fill="#1b3ba3"/>
<path d="M0 0 H3.200 L2.200 1 L3.700 2.500 L2.500 3.700 L1 2.200 L0 3.200 Z" transform="translate(2,2)" fill="#0b8a1b"/>
<path d="M0 0 H3.200 L2.200 1 L3.700 2.500 L2.500 3.700 L1 2.200 L0 3.200 Z" transform="translate(13,2) scale(-1,1)" fill="#0c2a9a"/>
<path d="M0 0 H3.200 L2.200 1 L3.700 2.500 L2.500 3.700 L1 2.200 L0 3.200 Z" transform="translate(2,12.900) scale(1,-1)" fill="#b41c1c"/>
<path d="M0 0 H3.200 L2.200 1 L3.700 2.500 L2.500 3.700 L1 2.200 L0 3.200 Z" transform="translate(13,12.900) scale(-1,-1)" fill="#f4c424"/>
</svg>
<div class="t" style="left:320px;top:99px;width:656px;text-align:center;font-size:14.800px;line-height:20px;height:20px;color:#1a1a1a;font-family:'Liberation Sans',sans-serif">Edit Source Code in Metadata</div>
<div class="cap" style="left:936px;top:94px;width:34px;height:21px;background:#c65a4e;border:1px solid #7a3030;border-top:none">x</div>
<div class="abs" style="left:335px;top:136px;width:626px;height:400px;border:1px solid #828790;background:#fff"></div>
<div class="abs" style="left:336px;top:137px;width:49px;height:381px;background:#f0f0f0"></div>
<div class="abs" style="left:336px;top:518px;width:52px;height:17px;background:#f0f0f0"></div>
<div class="abs" style="left:336px;top:137px;width:607px;height:381px;overflow:hidden">
<div class="ln" style="left:0;top:2px;color:#f00">1</div>
<div class="code" style="left:52px;top:2px">/*********************************************************************/</div>
<div class="ln" style="left:0;top:19px;color:#000">2</div>
<div class="code" style="left:52px;top:19px">/*   Availability.sas       SAS 9.4   M3                             */</div>
<div class="ln" style="left:0;top:36px;color:#000">3</div>
<div class="code" style="left:52px;top:36px">/*      Runs report in SAS EV (Report Center) on availability of     */</div>
<div class="ln" style="left:0;top:53px;color:#000">4</div>
<div class="code" style="left:52px;top:53px">/*      server resources.  Requires macro variable to be defined     */</div>
<div class="ln" style="left:0;top:70px;color:#000">5</div>
<div class="code" style="left:52px;top:70px">/*      TimePeriod, with value of (dtday, dtweek, dtmonth, or dtqtr) */</div>
<div class="ln" style="left:0;top:87px;color:#000">6</div>
<div class="code" style="left:52px;top:87px">/*      Requires data sets:  acm.resourceinventory                   */</div>
<div class="ln" style="left:0;top:104px;color:#000">7</div>
<div class="code" style="left:52px;top:104px">/*                           acm.availability                        */</div>
<div class="ln" style="left:0;top:121px;color:#000">8</div>
<div class="code" style="left:52px;top:121px">/*            from Service Architecture Framework datamart           */</div>
<div class="ln" style="left:0;top:138px;color:#000">9</div>
<div class="code" style="left:52px;top:138px">/*                          Dave Naden August 2016                   */</div>
<div class="ln" style="left:0;top:155px;color:#000">10</div>
<div class="code" style="left:52px;top:155px">/*********************************************************************/</div>
<div class="ln" style="left:0;top:172px;color:#000">11</div>
<div class="ln" style="left:0;top:189px;color:#000">12</div>
<div class="code" style="left:52px;top:189px">*ProcessBody;</div>
<div class="ln" style="left:0;top:206px;color:#000">13</div>
<div class="ln" style="left:0;top:223px;color:#000">14</div>
<div class="code" style="left:52px;top:223px;color:#000;-webkit-text-stroke:0"><span style="color:#0000f0;-webkit-text-stroke:0.15px #0000f0">%global</span> _DEBUG</div>
<div class="ln" style="left:0;top:240px;color:#000">15</div>
<div class="code" style="left:52px;top:240px;color:#000;-webkit-text-stroke:0">        _EVDEBUG</div>
<div class="ln" style="left:0;top:257px;color:#000">16</div>
<div class="code" style="left:52px;top:257px;color:#000;-webkit-text-stroke:0">        _EVODSDEST</div>
<div class="ln" style="left:0;top:274px;color:#000">17</div>
<div class="code" style="left:52px;top:274px;color:#000;-webkit-text-stroke:0">        _EVODSSTYLE</div>
<div class="ln" style="left:0;top:291px;color:#000">18</div>
<div class="code" style="left:52px;top:291px;color:#000;-webkit-text-stroke:0">        _EVSHOWPARM</div>
<div class="ln" style="left:0;top:308px;color:#000">19</div>
<div class="code" style="left:52px;top:308px;color:#000;-webkit-text-stroke:0">        FNOTE1</div>
<div class="ln" style="left:0;top:325px;color:#000">20</div>
<div class="code" style="left:52px;top:325px;color:#000;-webkit-text-stroke:0">        FNOTE2</div>
<div class="ln" style="left:0;top:342px;color:#000">21</div>
<div class="code" style="left:52px;top:342px;color:#000;-webkit-text-stroke:0">        FNOTE3</div>
<div class="ln" style="left:0;top:359px;color:#000">22</div>
<div class="code" style="left:52px;top:359px;color:#000;-webkit-text-stroke:0">        TITLE1</div>
<div class="ln" style="left:0;top:376px;color:#000">23</div>
<div class="code" style="left:52px;top:376px;color:#000;-webkit-text-stroke:0">        TITLE2</div>
<div class="abs" style="left:52px;top:0px;width:1px;height:16px;background:#000"></div>
</div>
<div class="abs" style="left:943px;top:137px;width:17px;height:381px;background:#fff;border-left:1px solid #c4c4c4"></div>
<div class="abs" style="left:944px;top:153px;width:16px;height:1px;background:#c4c4c4"></div>
<div class="abs" style="left:944px;top:154px;width:16px;height:41px;background:#dcdcdc;border:1px solid #a8a8a8"></div>
<div class="abs" style="left:948px;top:170px;width:7px;height:8px;background:repeating-linear-gradient(180deg,#606060 0 2px,transparent 2px 3px)"></div>
<div class="abs" style="left:944px;top:501px;width:16px;height:1px;background:#c4c4c4"></div>
<svg style="left:951.0px;top:146.2px" width="1" height="1"><path d="M-3.500 1.500 L0 -2 L3.500 1.500" fill="none" stroke="#606060" stroke-width="1.300"/></svg>
<svg style="left:951.0px;top:508.7px" width="1" height="1"><path d="M-3.500 -1.500 L0 2 L3.500 -1.500" fill="none" stroke="#606060" stroke-width="1.300"/></svg>
<div class="abs" style="left:388px;top:518px;width:555px;height:17px;background:#fff;border-top:1px solid #c4c4c4;border-left:1px solid #c4c4c4"></div>
<div class="abs" style="left:405px;top:518px;width:460px;height:17px;background:#dcdcdc;border:1px solid #a8a8a8;border-bottom:none"></div>
<div class="abs" style="left:926px;top:519px;width:1px;height:16px;background:#c4c4c4"></div>
<div class="abs" style="left:943px;top:518px;width:17px;height:17px;background:#f0f0f0;border-left:1px solid #c4c4c4;border-top:1px solid #c4c4c4"></div>
<svg style="left:396.0px;top:525.7px" width="1" height="1"><path d="M1.500 -3.500 L-2 0 L1.500 3.500" fill="none" stroke="#606060" stroke-width="1.300"/></svg>
<svg style="left:934.0px;top:525.7px" width="1" height="1"><path d="M-1.500 -3.500 L2 0 L-1.500 3.500" fill="none" stroke="#606060" stroke-width="1.300"/></svg>
<div class="abs" style="left:631px;top:523px;width:8px;height:7px;background:repeating-linear-gradient(90deg,#606060 0 2px,transparent 2px 3px)"></div>
<div class="btn def" style="left:827px;top:547px">OK</div>
<div class="btn" style="left:897px;top:547px">Cancel</div>

</div></div>
</body></html>
